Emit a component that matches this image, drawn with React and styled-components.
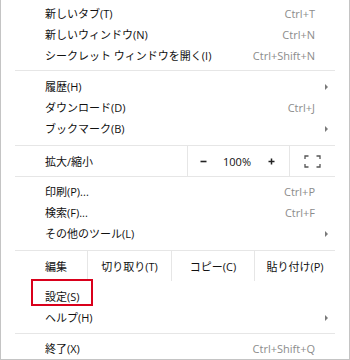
import React from "react";
import styled, { createGlobalStyle } from "styled-components";

const GlobalStyle = createGlobalStyle`
  html, body { margin: 0; padding: 0; background: #ffffff; }
  body { font-family: "Open Sans", "Noto Sans CJK JP", sans-serif; }
`;

const Frame = styled.div`
  width: 350px;
  height: 360px;
  box-sizing: border-box;
  border: 1px solid #c4c4c4;
  border-top: none;
  padding: 3px 14px 0 14px;
  background: #fff;
  font-family: "Open Sans", "Noto Sans CJK JP", sans-serif;
  font-size: 11px;
  color: #111;
  overflow: hidden;
`;

const Item = styled.div`
  display: grid;
  grid-template-columns: 1fr auto 20px;
  align-items: center;
  height: 21px;
  padding-left: 30px;
  white-space: nowrap;
`;

const Label = styled.span`
  position: relative;
  line-height: 21px;
`;

const Shortcut = styled.span`
  color: #8c8c8c;
  font-size: 11px;
  line-height: 21px;
`;

const End = styled.span`
  display: flex;
  justify-content: center;
  align-items: center;
`;

const Arrow = styled.span`
  width: 0;
  height: 0;
  border-top: 3px solid transparent;
  border-bottom: 3px solid transparent;
  border-left: 3px solid #7a7a7a;
  margin-left: 3px;
`;

const Separator = styled.div`
  height: 1px;
  background: #e6e6e6;
  margin: ${(p) => p.$top}px 0 ${(p) => p.$bottom}px 0;
`;

const Gap = styled.div`
  height: ${(p) => p.$h}px;
`;

const ToolRow = styled.div`
  display: grid;
  grid-template-columns: ${(p) => p.$cols};
  height: 30px;
  border-top: 1px solid #e6e6e6;
  border-bottom: ${(p) => (p.$bottom ? "1px solid #e6e6e6" : "none")};
  white-space: nowrap;
`;

const RowLabel = styled.div`
  display: flex;
  align-items: center;
  padding-left: 30px;
`;

const Cell = styled.div`
  display: flex;
  align-items: center;
  justify-content: center;
  border-left: 1px solid #e6e6e6;
`;

const ZoomCell = styled(Cell)`
  justify-content: flex-start;
`;

const ZoomBtn = styled.span`
  width: 30px;
  display: flex;
  justify-content: center;
  align-items: center;
`;

const Percent = styled.span`
  width: 38px;
  text-align: center;
  font-size: 11px;
`;

const Highlight = styled.span`
  position: absolute;
  left: -14px;
  top: -7px;
  width: 62px;
  height: 27px;
  box-sizing: border-box;
  border: 2px solid #d9001b;
  pointer-events: none;
`;

function MenuItem({ label, shortcut, submenu, highlight }) {
  return (
    <Item>
      <Label>
        {label}
        {highlight && <Highlight />}
      </Label>
      <Shortcut>{shortcut}</Shortcut>
      <End>{submenu && <Arrow />}</End>
    </Item>
  );
}

function MinusIcon() {
  return (
    <svg width="7" height="7" viewBox="0 0 7 7" fill="none" stroke="#222" strokeWidth="1.6">
      <path d="M0.5 3.5h6" />
    </svg>
  );
}

function PlusIcon() {
  return (
    <svg width="7" height="7" viewBox="0 0 7 7" fill="none" stroke="#222" strokeWidth="1.5">
      <path d="M0.5 3.5h6M3.5 0.5v6" />
    </svg>
  );
}

function FullscreenIcon() {
  return (
    <svg width="17" height="13" viewBox="0 0 17 13" fill="none" stroke="#555" strokeWidth="1.3">
      <path d="M1 4V1h3.5" />
      <path d="M12.5 1H16v3" />
      <path d="M16 9v3h-3.5" />
      <path d="M4.5 12H1V9" />
    </svg>
  );
}

export default function App() {
  return (
    <>
      <GlobalStyle />
      <Frame>
        <MenuItem label="新しいタブ(T)" shortcut="Ctrl+T" />
        <MenuItem label="新しいウィンドウ(N)" shortcut="Ctrl+N" />
        <MenuItem label="シークレット ウィンドウを開く(I)" shortcut="Ctrl+Shift+N" />
        <Separator $top={4} $bottom={5} />
        <MenuItem label="履歴(H)" submenu />
        <MenuItem label="ダウンロード(D)" shortcut="Ctrl+J" />
        <MenuItem label="ブックマーク(B)" submenu />
        <Gap $h={6} />
        <ToolRow $cols="172px 102px 1fr" $bottom>
          <RowLabel>拡大/縮小</RowLabel>
          <ZoomCell>
            <ZoomBtn>
              <MinusIcon />
            </ZoomBtn>
            <Percent>100%</Percent>
            <ZoomBtn>
              <PlusIcon />
            </ZoomBtn>
          </ZoomCell>
          <Cell>
            <FullscreenIcon />
          </Cell>
        </ToolRow>
        <Gap $h={4} />
        <MenuItem label="印刷(P)..." shortcut="Ctrl+P" />
        <MenuItem label="検索(F)..." shortcut="Ctrl+F" />
        <MenuItem label="その他のツール(L)" submenu />
        <Gap $h={6} />
        <ToolRow $cols="72px 84px 83px 1fr">
          <RowLabel>編集</RowLabel>
          <Cell>切り取り(T)</Cell>
          <Cell>コピー(C)</Cell>
          <Cell>貼り付け(P)</Cell>
        </ToolRow>
        <Gap $h={5} />
        <MenuItem label="設定(S)" highlight />
        <MenuItem label="ヘルプ(H)" submenu />
        <Separator $top={5} $bottom={4} />
        <MenuItem label="終了(X)" shortcut="Ctrl+Shift+Q" />
      </Frame>
    </>
  );
}
